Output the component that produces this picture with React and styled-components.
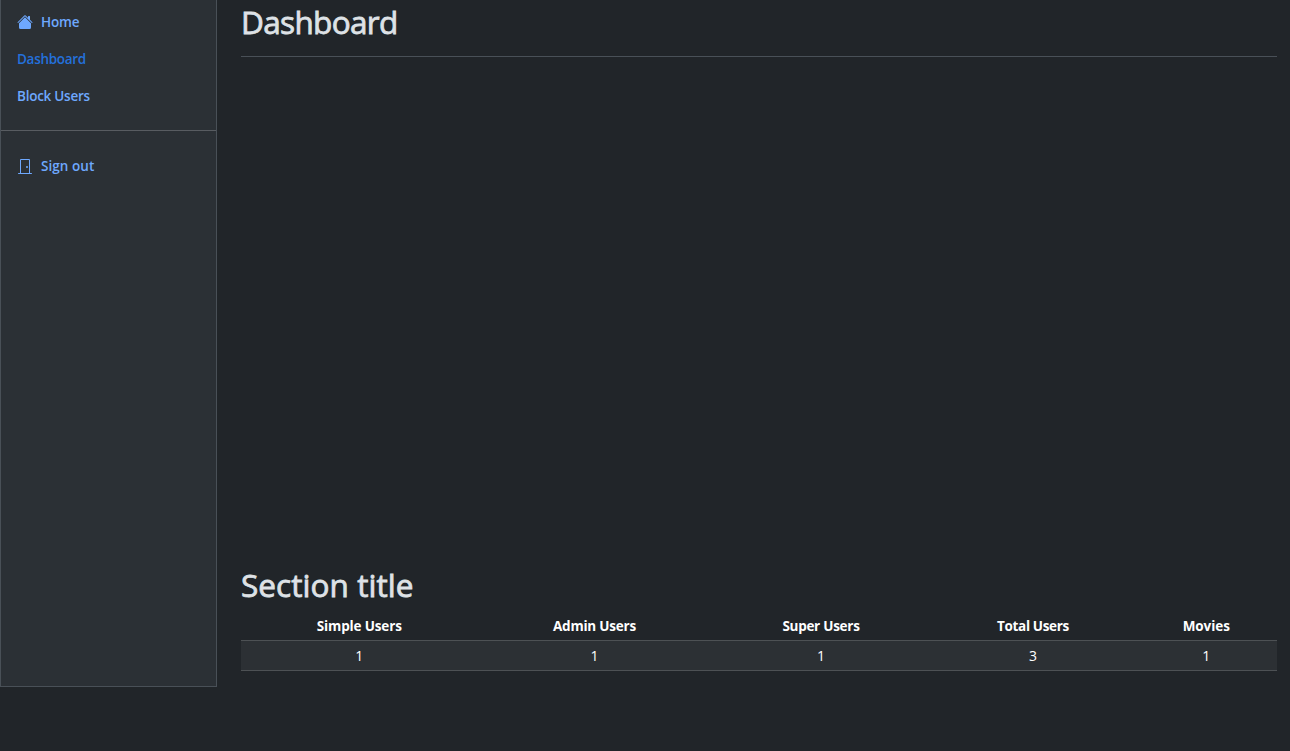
import React from "react";
import styled, { createGlobalStyle } from "styled-components";
import { BsHouseFill, BsDoorClosed } from "react-icons/bs";

const GlobalStyle = createGlobalStyle`
  *, *::before, *::after { box-sizing: border-box; }
  body {
    margin: 0;
    background: #212529;
    color: #dee2e6;
    font-family: "Segoe UI", "Open Sans", "Noto Sans", sans-serif;
    font-size: 16px;
    line-height: 1.5;
    overflow: hidden;
  }
`;

const Page = styled.div`
  display: flex;
  align-items: flex-start;
  height: 751px;
`;

const Sidebar = styled.aside`
  width: 217px;
  height: 687px;
  padding-top: 3px;
  flex: none;
  background: #2b3035;
  border: 1px solid #495057;
  border-top: 0;
`;

const NavList = styled.nav`
  display: flex;
  flex-direction: column;
`;

const NavLink = styled.a`
  display: flex;
  align-items: center;
  gap: 8px;
  height: 37px;
  padding: 0 16px;
  font-size: 13.5px;
  line-height: 21px;
  font-weight: 600;
  white-space: nowrap;
  letter-spacing: ${({ $track }) => $track || 0}px;
  color: ${({ $active }) => ($active ? "#2470dc" : "#6ea8fe")};
  text-decoration: none;

  svg {
    width: 16px;
    height: 16px;
    flex: none;
  }
`;

const NavLabel = styled.span`
  padding-top: 2px;
`;

const Divider = styled.hr`
  margin: 16px 0;
  border: 0;
  border-top: 1px solid #585c61;
`;

const Main = styled.main`
  flex: 1;
  padding: 0 13px 0 24px;
`;

const Header = styled.header`
  height: 57px;
  padding-top: 3px;
  margin-bottom: 509px;
  border-bottom: 1px solid #495057;
`;

const Title = styled.h1`
  margin: 0;
  font-size: ${({ $size }) => $size}px;
  line-height: 38px;
  font-weight: 500;
  white-space: nowrap;
  letter-spacing: ${({ $track }) => $track || 0}px;
  -webkit-text-stroke: 0.8px currentColor;
`;

const Table = styled.table`
  width: 100%;
  margin-top: 7px;
  table-layout: fixed;
  border-collapse: separate;
  border-spacing: 0;
  font-size: 14px;
  line-height: 21px;
  color: #fff;
  text-align: center;
`;

const Column = styled.col`
  width: ${({ $width }) => $width}px;
`;

const HeadCell = styled.th`
  height: 30px;
  padding: 5px 4px 3px;
  font-size: 13.5px;
  font-weight: 700;
  white-space: nowrap;
  letter-spacing: ${({ $track }) => $track || 0}px;
  border-bottom: 1px solid #4d5154;
`;

const Cell = styled.td`
  height: 30px;
  padding: 4px;
  background: #2c3034;
  border-bottom: 1px solid #4d5154;
`;

const stats = [
  { label: "Simple Users", value: 1, width: 236.5, track: -0.15 },
  { label: "Admin Users", value: 1, width: 234, track: -0.21 },
  { label: "Super Users", value: 1, width: 219, track: -0.27 },
  { label: "Total Users", value: 3, width: 205, track: -0.33 },
  { label: "Movies", value: 1, width: 141.5, track: -0.06 },
];

export default function App() {
  return (
    <>
      <GlobalStyle />
      <Page>
        <Sidebar>
          <NavList>
            <NavLink $track={-0.2}><BsHouseFill /><NavLabel>Home</NavLabel></NavLink>
            <NavLink $active $track={-0.3}><NavLabel>Dashboard</NavLabel></NavLink>
            <NavLink $track={-0.25}><NavLabel>Block Users</NavLabel></NavLink>
          </NavList>
          <Divider />
          <NavList>
            <NavLink $track={0.06}><BsDoorClosed /><NavLabel>Sign out</NavLabel></NavLink>
          </NavList>
        </Sidebar>
        <Main>
          <Header>
            <Title $size={31.5} $track={-0.65}>Dashboard</Title>
          </Header>
          <Title as="h2" $size={31.5} $track={0.06}>Section title</Title>
          <Table>
            <colgroup>
              {stats.map((s) => <Column key={s.label} $width={s.width} />)}
            </colgroup>
            <thead>
              <tr>
                {stats.map((s) => (
                  <HeadCell key={s.label} $track={s.track}>{s.label}</HeadCell>
                ))}
              </tr>
            </thead>
            <tbody>
              <tr>
                {stats.map((s) => <Cell key={s.label}>{s.value}</Cell>)}
              </tr>
            </tbody>
          </Table>
        </Main>
      </Page>
    </>
  );
}
